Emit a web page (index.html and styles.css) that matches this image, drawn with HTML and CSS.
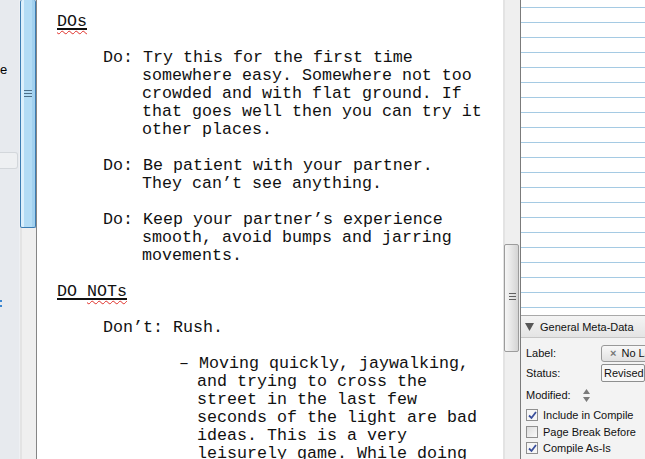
FILE: index.html
```
<!DOCTYPE html>
<html>
<head>
    <meta charset="utf-8">
    <title>Editor</title>
    <link rel="stylesheet" href="styles.css">
</head>
<body>
<div class="app">
    <div class="binder">
        <div class="binder-text">e</div>
        <div class="binder-item"></div>
        <div class="binder-mark"></div>
    </div>
    <div class="vscroll left">
        <div class="thumb blue"><span class="grip"></span></div>
    </div>
    <div class="editor">
        <p class="head"><span class="ul"><span class="spell">DOs</span></span></p>
        <p class="do">Do: Try this for the first time<br>somewhere easy. Somewhere not too<br>crowded and with flat ground. If<br>that goes well then you can try it<br>other places.</p>
        <p class="do">Do: Be patient with your partner.<br>They can’t see anything.</p>
        <p class="do">Do: Keep your partner’s experience<br>smooth, avoid bumps and jarring<br>movements.</p>
        <p class="head"><span class="ul">DO <span class="spell">NOTs</span></span></p>
        <p class="do">Don’t: Rush.</p>
        <p class="dash">– Moving quickly, jaywalking,<br>and trying to cross the<br>street in the last few<br>seconds of the light are bad<br>ideas. This is a very<br>leisurely game. While doing</p>
    </div>
    <div class="vscroll right">
        <div class="thumb grey"><span class="grip"></span></div>
    </div>
    <div class="inspector">
        <div class="card"></div>
        <div class="meta-head">
            <svg class="tri" width="9" height="8" viewBox="0 0 9 8"><path d="M0 0H9L4.5 8Z" fill="#575757"/></svg>
            General Meta-Data
        </div>
        <div class="meta-body">
            <div class="row">
                <span>Label:</span>
                <span class="btn"><span class="x">×</span> No Label</span>
            </div>
            <div class="row">
                <span>Status:</span>
                <span class="select">Revised</span>
            </div>
            <div class="row mod">
                <span>Modified:</span>
                <svg width="7" height="13" viewBox="0 0 7 13"><path d="M3.5 0L7 5H0Z M3.5 13L7 8H0Z" fill="#7a7a7a"/></svg>
            </div>
            <div class="checks">
                <label class="check"><span class="box on"><svg width="9" height="9" viewBox="0 0 9 9"><path d="M1 4.5L3.5 7L8 1" fill="none" stroke="#3a4f9c" stroke-width="1.8"/></svg></span>Include in Compile</label>
                <label class="check"><span class="box"></span>Page Break Before</label>
                <label class="check"><span class="box on"><svg width="9" height="9" viewBox="0 0 9 9"><path d="M1 4.5L3.5 7L8 1" fill="none" stroke="#3a4f9c" stroke-width="1.8"/></svg></span>Compile As-Is</label>
            </div>
        </div>
    </div>
</div>
</body>
</html>
```
FILE: styles.css
```
body {
    margin: 0;
    overflow: hidden;
    background: #fff;
}

.app {
    display: flex;
    height: 459px;
    overflow: hidden;
}

/* binder */
.binder {
    width: 20px;
    flex: none;
    background: #e7eaee;
    border-right: 1px solid #eef0f3;
    box-sizing: border-box;
    font-family: "Liberation Sans", Arial, sans-serif;
    font-size: 13px;
}

.binder-text {
    padding-top: 62px;
    line-height: 16px;
}

.binder-item {
    margin-top: 74px;
    width: 18px;
    height: 17px;
    box-sizing: border-box;
    background: #eef0f2;
    border: 1px solid #d3d7db;
    border-left: none;
    border-radius: 0 3px 3px 0;
}

.binder-mark {
    margin-top: 131px;
    width: 2px;
    height: 8px;
    background: linear-gradient(#3a86d0 0 2px, transparent 2px 5px, #3a86d0 5px 7px, transparent 7px);
}

/* scrollbars */
.vscroll {
    flex: none;
    width: 17px;
    box-sizing: border-box;
    background: linear-gradient(to right, #e3e3e3 0 2px, #efefef 2px);
    border-right: 1px solid #858585;
    position: relative;
}

.vscroll.right {
    width: 18px;
    border-right-color: #7b7b7b;
}

.thumb {
    box-sizing: border-box;
    border-radius: 2px;
    position: relative;
}

.thumb.blue {
    width: 16px;
    height: 228px;
    border: 1px solid #3c7db3;
    border-top: none;
    background: linear-gradient(to right, #dcf0fc 0 3px, #b3dcf5 3px 11px, #a2d1ef 11px);
}

.thumb.grey {
    margin: 244px 0 0 1px;
    width: 15px;
    height: 108px;
    border: 1px solid #9c9c9c;
    background: linear-gradient(to right, #f6f6f6, #e6e6e6 50%, #d4d4d4);
}

.grip {
    position: absolute;
    left: 3px;
    width: 8px;
    height: 7px;
    background: linear-gradient(#4d6f88 0 1px, transparent 1px 3px, #4d6f88 3px 4px, transparent 4px 6px, #4d6f88 6px 7px);
}

.thumb.blue .grip {
    top: 90px;
}

.thumb.grey .grip {
    top: 48px;
    left: 4px;
    width: 7px;
    background: linear-gradient(#606060 0 1px, transparent 1px 3px, #606060 3px 4px, transparent 4px 6px, #606060 6px 7px);
}

/* editor */
.editor {
    flex: 1;
    min-width: 0;
    padding: 13px 0 0 20px;
    font-family: "Liberation Mono", "Courier New", monospace;
    font-size: 16.66px;
    line-height: 18px;
    color: #111;
    white-space: nowrap;
    overflow: hidden;
}

.editor p {
    margin: 0 0 18px;
}

.head .ul {
    text-decoration: underline;
    text-decoration-thickness: 2px;
    text-underline-offset: 2px;
}

.spell {
    text-decoration: underline wavy #e0302a;
    text-decoration-thickness: 1px;
    text-underline-offset: 4px;
}

.do {
    margin-left: 85px !important;
    text-indent: -39px;
}

.dash {
    margin-left: 140px !important;
    text-indent: -18px;
}

/* inspector */
.inspector {
    flex: none;
    width: 124px;
    display: flex;
    flex-direction: column;
    font-family: "Liberation Sans", Tahoma, sans-serif;
    font-size: 11px;
    color: #111;
    white-space: nowrap;
    overflow: hidden;
}

.card {
    height: 316px;
    flex: none;
    box-sizing: border-box;
    background: repeating-linear-gradient(to bottom, #fff 0 7px, #a5cae3 7px 8px, #fff 8px 15px);
    border-bottom: 1px solid #a9a9a9;
}

.meta-head {
    height: 21px;
    flex: none;
    display: flex;
    align-items: center;
    gap: 6px;
    padding-left: 4px;
    background: linear-gradient(#f4f4f4, #e4e4e4);
    border-bottom: 1px solid #c6c6c6;
}

.meta-body {
    flex: 1;
    background: #f3f3f3;
    padding: 5px 0 0 5px;
}

.row {
    display: grid;
    grid-template-columns: 75px auto;
    align-items: center;
    height: 20px;
}

.btn {
    height: 17px;
    box-sizing: border-box;
    padding-left: 8px;
    line-height: 15px;
    border: 1px solid #999;
    border-radius: 3px;
    background: linear-gradient(#f8f8f8, #e1e1e1);
}

.x {
    color: #777;
    font-weight: bold;
    margin-right: 2px;
}

.select {
    height: 18px;
    box-sizing: border-box;
    padding-left: 2px;
    line-height: 16px;
    border: 1px solid #8e8f8f;
    border-radius: 2px;
    background: #f7f7f7;
}

.row.mod {
    grid-template-columns: 57px auto;
    height: 24px;
}

.checks {
    display: flex;
    flex-direction: column;
}

.check {
    display: flex;
    align-items: center;
    gap: 5px;
    height: 16.5px;
}

.box {
    width: 12px;
    height: 12px;
    box-sizing: border-box;
    border: 1px solid #8f8f8f;
    background: linear-gradient(135deg, #dcdcdc, #fafafa);
    display: flex;
    align-items: center;
    justify-content: center;
}

.box.on {
    background: #f6f6f6;
}
```
